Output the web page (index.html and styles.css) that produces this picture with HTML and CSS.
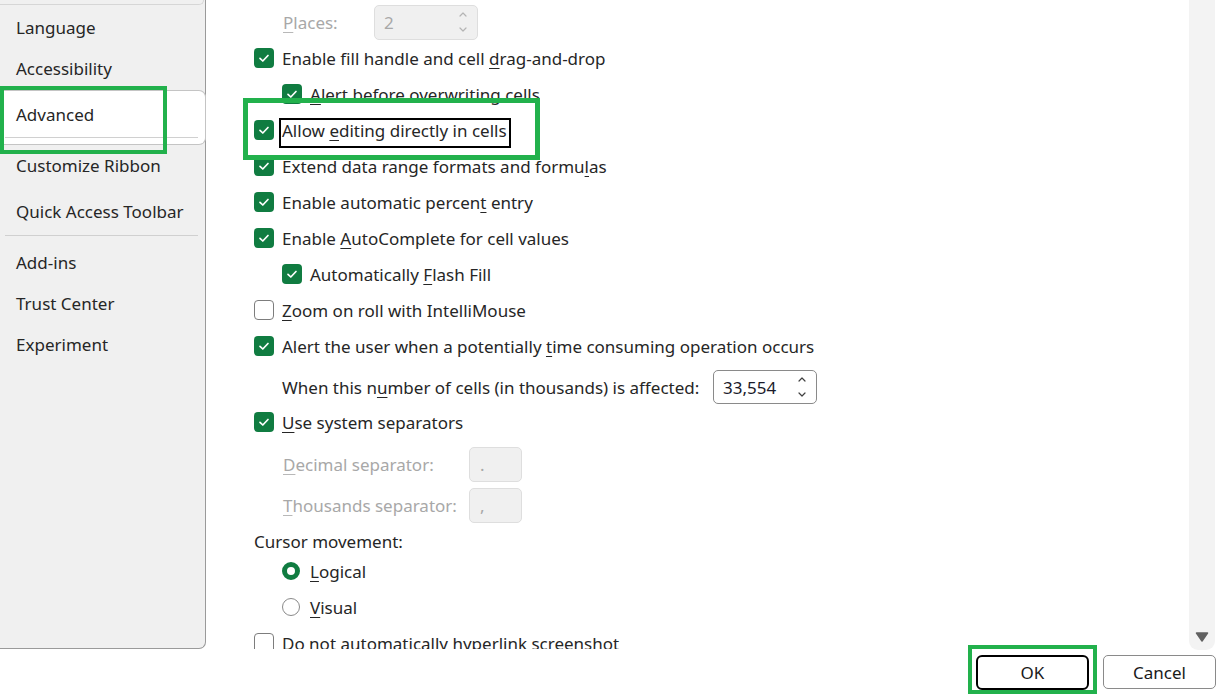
FILE: index.html
```html
<!DOCTYPE html>
<html>
<head>
<meta charset="utf-8">
<link rel="stylesheet" href="styles.css">
</head>
<body>
<div class="dialog">
  <div class="top">
    <nav class="sidebar">
      <div class="cap"></div>
      <div class="nav-item lang">Language</div>
      <div class="nav-item">Accessibility</div>
      <div class="nav-selected">
        <div class="nav-sel-label">Advanced</div>
        <div class="nav-sep"></div>
      </div>
      <div class="nav-item custom">Customize Ribbon</div>
      <div class="nav-item quick">Quick Access Toolbar</div>
      <div class="nav-sep2"></div>
      <div class="nav-item addins">Add-ins</div>
      <div class="nav-item">Trust Center</div>
      <div class="nav-item">Experiment</div>
    </nav>
    <main class="content">
      <div class="row places">
        <span class="label-fixed disabled"><u>P</u>laces:</span>
        <div class="spin disabled-box">
          <span class="spin-val">2</span>
          <svg class="chev" width="10" height="26" viewBox="0 0 10 26"><path d="M2 7 L5 4 L8 7" /><path d="M2 19 L5 22 L8 19" /></svg>
        </div>
      </div>
      <div class="row"><span class="cb on"><svg viewBox="0 0 20 20"><path d="M6 10.3 L8.8 13 L14 7.5"/></svg></span><span>Enable fill handle and cell <u>d</u>rag-and-drop</span></div>
      <div class="row ind"><span class="cb on"><svg viewBox="0 0 20 20"><path d="M6 10.3 L8.8 13 L14 7.5"/></svg></span><span><u>A</u>lert before overwriting cells</span></div>
      <div class="row"><span class="cb on"><svg viewBox="0 0 20 20"><path d="M6 10.3 L8.8 13 L14 7.5"/></svg></span><span class="focus"><span>Allow <u>e</u>diting directly in cells</span></span></div>
      <div class="row"><span class="cb on"><svg viewBox="0 0 20 20"><path d="M6 10.3 L8.8 13 L14 7.5"/></svg></span><span>Extend data range formats and formu<u>l</u>as</span></div>
      <div class="row"><span class="cb on"><svg viewBox="0 0 20 20"><path d="M6 10.3 L8.8 13 L14 7.5"/></svg></span><span>Enable automatic percen<u>t</u> entry</span></div>
      <div class="row"><span class="cb on"><svg viewBox="0 0 20 20"><path d="M6 10.3 L8.8 13 L14 7.5"/></svg></span><span>Enable <u>A</u>utoComplete for cell values</span></div>
      <div class="row ind"><span class="cb on"><svg viewBox="0 0 20 20"><path d="M6 10.3 L8.8 13 L14 7.5"/></svg></span><span>Automatically <u>F</u>lash Fill</span></div>
      <div class="row"><span class="cb off"></span><span><u>Z</u>oom on roll with IntelliMouse</span></div>
      <div class="row"><span class="cb on"><svg viewBox="0 0 20 20"><path d="M6 10.3 L8.8 13 L14 7.5"/></svg></span><span>Alert the user when a potentially <u>t</u>ime consuming operation occurs</span></div>
      <div class="row when">
        <span class="when-label">When this n<u>u</u>mber of cells (in thousands) is affected:</span>
        <div class="spin num-box">
          <span class="spin-val">33,554</span>
          <svg class="chev dark" width="10" height="26" viewBox="0 0 10 26"><path d="M2 7 L5 4 L8 7" /><path d="M2 19 L5 22 L8 19" /></svg>
        </div>
      </div>
      <div class="row"><span class="cb on"><svg viewBox="0 0 20 20"><path d="M6 10.3 L8.8 13 L14 7.5"/></svg></span><span><u>U</u>se system separators</span></div>
      <div class="row sep-row first">
        <span class="sep-label disabled"><u>D</u>ecimal separator:</span>
        <div class="sep-box disabled-box"><span>.</span></div>
      </div>
      <div class="row sep-row">
        <span class="sep-label disabled"><u>T</u>housands separator:</span>
        <div class="sep-box disabled-box"><span>,</span></div>
      </div>
      <div class="row cursor">Cursor movement:</div>
      <div class="row ind"><span class="radio on"></span><span><u>L</u>ogical</span></div>
      <div class="row ind"><span class="radio off"></span><span><u>V</u>isual</span></div>
      <div class="row"><span class="cb off"></span><span>Do not automatically hyperlink screenshot</span></div>
    </main>
    <div class="scrollbar">
      <svg width="14" height="10" viewBox="0 0 14 10"><path d="M1.5 1 L12.5 1 L7 9 Z" fill="#616161" stroke="#616161" stroke-width="1.5" stroke-linejoin="round"/></svg>
    </div>
  </div>
  <div class="bottom">
    <button class="btn ok">OK</button>
    <button class="btn cancel">Cancel</button>
  </div>
  <div class="mark mark-adv"></div>
  <div class="mark mark-edit"></div>
  <div class="mark mark-ok"></div>
</div>
</body>
</html>
```
FILE: styles.css
```css
* { box-sizing: border-box; }
html, body { margin: 0; padding: 0; background: #fff; }
body {
  font-family: "Noto Sans", "Open Sans", sans-serif;
  font-size: 17px;
  color: #262626;
}
u { text-decoration-thickness: 1px; text-underline-offset: 3px; }
.dialog { position: relative; width: 1225px; height: 699px; overflow: hidden; }
.top { display: flex; height: 649px; }

.sidebar {
  width: 206px;
  flex: none;
  background: #f0f0f0;
  border-right: 1px solid #9a9a9a;
  border-bottom: 1px solid #9a9a9a;
  border-bottom-right-radius: 7px;
  display: flex;
  flex-direction: column;
}
.cap {
  height: 5px;
  margin-right: 1px;
  border-bottom: 1px solid #d6d6d6;
  border-right: 1px solid #d6d6d6;
  border-bottom-right-radius: 6px;
}
.nav-item { height: 41px; line-height: 41px; padding-left: 16px; white-space: nowrap; }
.nav-item.lang { margin-top: 2px; }
.nav-selected {
  margin-top: 1px;
  height: 55px;
  margin-right: -1px;
  background: #fff;
  border: 1px solid #c4c4c4;
  border-left: none;
  border-radius: 0 7px 7px 0;
}
.nav-sel-label { height: 46px; line-height: 48px; padding-left: 16px; }
.nav-sep { height: 1px; background: #d0d0d0; margin: 0 7px 0 5px; }
.nav-item.custom { height: 44px; line-height: 42px; }
.nav-item.quick { height: 46px; line-height: 46px; }
.nav-sep2 { height: 1px; background: #d0d0d0; margin: 0 7px 0 5px; flex: none; }
.nav-item.addins { margin-top: 6px; }

.content {
  flex: 1;
  overflow: hidden;
  padding: 4px 0 0 48px;
  display: flex;
  flex-direction: column;
}
.row {
  display: flex;
  align-items: center;
  gap: 8px;
  height: 36px;
  flex: none;
  white-space: nowrap;
}
.row.ind { padding-left: 28px; }
.row.places { padding-left: 29px; gap: 0; }
.label-fixed { width: 91px; }
.disabled { color: #a8a8a8; }
.disabled u { text-decoration-color: #b8b8b8; }

.cb {
  width: 20px; height: 20px; border-radius: 4px; flex: none;
  display: flex; align-items: center; justify-content: center;
}
.cb.on { background: #107c41; }
.cb.on svg { width: 20px; height: 20px; fill: none; stroke: #fff; stroke-width: 1.7; stroke-linecap: round; stroke-linejoin: round; }
.cb.off { border: 1px solid #7d7d7d; background: #fff; }

.focus {
  display: flex;
  align-items: center;
  height: 30px;
  margin-top: 6px;
  margin-left: -3px;
  padding: 0 2px 6px 1px;
  border: 2px solid #000;
}

.spin {
  display: flex; align-items: center; justify-content: space-between;
  border-radius: 5px; padding: 0 9px 0 9px;
}
.disabled-box { background: #f0f0f0; border: 1px solid #dedede; color: #a8a8a8; }
.places .spin { width: 104px; height: 35px; }
.chev { fill: none; stroke: #b4b4b4; stroke-width: 1.2; stroke-linecap: round; stroke-linejoin: round; }
.chev.dark { stroke: #404040; }
.when { margin-top: 6px; height: 34px; gap: 0; padding-left: 28px; }
.when-label { width: 431px; }
.num-box { width: 104px; height: 34px; border: 1px solid #8a8a8a; background: #fff; color: #1a1a2a; }

.sep-row { height: 35px; margin-top: 6px; padding-left: 29px; gap: 0; }
.sep-row.first { margin-top: 7px; }
.sep-label { width: 186px; }
.sep-box { width: 53px; height: 35px; border-radius: 5px; padding-left: 10px; display: flex; align-items: center; }

.cursor { height: 30px; padding-top: 6px; }

.radio { width: 18px; height: 18px; border-radius: 50%; flex: none; margin-right: 2px; }
.radio.on { border: 5px solid #107c41; background: #fff; }
.radio.off { border: 1.5px solid #8a8a8a; background: #fff; }

.scrollbar {
  width: 26px; height: 650px; flex: none;
  margin-right: 10px;
  background: #f3f3f3;
  border-radius: 0 0 9px 9px;
  display: flex; flex-direction: column; justify-content: flex-end; align-items: center;
  padding-bottom: 8px;
}

.bottom {
  display: flex; justify-content: flex-end; gap: 14px;
  padding: 6px 9px 0 0;
}
.btn {
  font-family: "Noto Sans", "Open Sans", sans-serif;
  font-size: 17px; color: #1a1a1a;
  width: 113px; background: #fff; padding: 0;
}
.btn.ok { height: 35px; border: 2px solid #000; border-radius: 6px; }
.btn.cancel { height: 34px; border: 1px solid #8a8a8a; border-radius: 5px; }

.mark { position: absolute; border: 4px solid #22b14c; pointer-events: none; }
.mark-adv { left: 0; top: 86px; width: 167px; height: 68px; }
.mark-edit { left: 243px; top: 98px; width: 297px; height: 62px; border-width: 5px; }
.mark-ok { left: 968px; top: 645px; width: 129px; height: 49px; }
```
